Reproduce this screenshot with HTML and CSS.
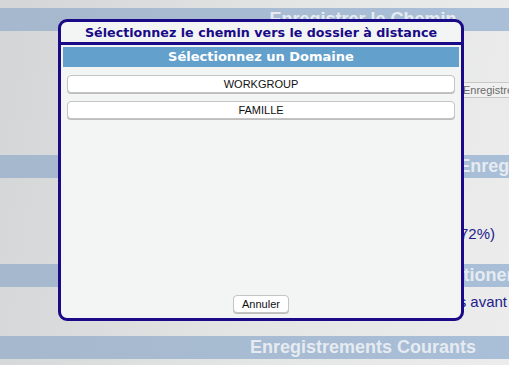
FILE: index.html
```html
<!DOCTYPE html>
<html lang="fr">
<head>
    <meta charset="UTF-8">
    <meta name="viewport" content="width=device-width, initial-scale=1.0">
    <title>Enregistrer le Chemin</title>
    <link rel="stylesheet" href="styles.css">
</head>
<body>
    <div class="page">
        <div class="section">
            <h2 class="band">Enregistrer le Chemin</h2>
            <div class="content content-path">
                <button class="save-btn">Enregistrer</button>
            </div>
        </div>
        <div class="section">
            <h2 class="band">Configuration de tous les Réglages d'Enregistrement</h2>
            <div class="content content-space">
                <p class="info">Espace utilisé : 2,9 To sur 4 To (72%)</p>
            </div>
        </div>
        <div class="section">
            <h2 class="band">Options de Sauvegarde et Repositionement</h2>
            <div class="content content-options">
                <p class="info">Supprimer les anciens enregistrements avant</p>
            </div>
        </div>
        <div class="section">
            <h2 class="band">Enregistrements Courants</h2>
        </div>
    </div>

    <div class="dialog">
        <h1 class="dialog-title">Sélectionnez le chemin vers le dossier à distance</h1>
        <h3 class="dialog-sub">Sélectionnez un Domaine</h3>
        <div class="domains">
            <button class="domain">WORKGROUP</button>
            <button class="domain">FAMILLE</button>
        </div>
        <div class="dialog-foot">
            <button class="cancel">Annuler</button>
        </div>
    </div>
</body>
</html>
```

FILE: styles.css
```css
html, body {
    margin: 0;
    height: 100%;
    overflow: hidden;
}
body {
    font-family: "Liberation Sans", Arial, sans-serif;
    background: linear-gradient(100deg, #d3d5d6 0%, #e4e5e5 55%, #ececec 100%);
    position: relative;
}
.page {
    width: 726px;
    padding-top: 8px;
}
.band {
    margin: 0;
    height: 23px;
    line-height: 23px;
    text-align: center;
    font-size: 18px;
    font-weight: bold;
    white-space: nowrap;
    color: #e6ebf1;
    background: linear-gradient(to right, #a6b8cd, #aac2dc);
}
.content {
    position: relative;
}
.content-path {
    height: 124px;
}
.content-space {
    height: 86px;
}
.content-options {
    height: 49px;
}
.save-btn {
    position: absolute;
    left: 456px;
    top: 51px;
    height: 16px;
    padding: 0 6px;
    font-family: "Liberation Sans", Arial, sans-serif;
    font-size: 11px;
    color: #6a6a6a;
    background: #f0f0f0;
    border: 1px solid #c8c8c8;
    border-radius: 3px;
}
.info {
    margin: 0;
    text-align: right;
    font-size: 15px;
    color: #251c88;
    white-space: nowrap;
}
.content-space .info {
    padding-top: 47px;
    margin-right: 231px;
}
.content-options .info {
    padding-top: 6px;
    margin-right: 219px;
}

.dialog {
    position: absolute;
    left: 58px;
    top: 19px;
    width: 400px;
    height: 296px;
    border: 3px solid #1a0a88;
    border-radius: 9px;
    background: #f3f5f5;
    display: flex;
    flex-direction: column;
    font-family: "DejaVu Sans", Verdana, sans-serif;
}
.dialog-title {
    margin: 0;
    padding: 3px 2px 2px;
    text-align: center;
    font-size: 12.7px;
    font-weight: bold;
    color: #1a0a88;
    border-bottom: 3px solid #1a0a88;
}
.dialog-sub {
    margin: 2px 2px 0;
    height: 20px;
    line-height: 20px;
    text-align: center;
    font-size: 13px;
    font-weight: bold;
    color: #ffffff;
    background: #64a0cc;
}
.domains {
    display: flex;
    flex-direction: column;
    gap: 8px;
    padding: 8px 6px 0;
    flex: 1;
}
.domain {
    height: 18px;
    padding: 0;
    font-family: "Liberation Sans", Arial, sans-serif;
    font-size: 11px;
    color: #111;
    background: #ffffff;
    border: 1px solid #c4c4c4;
    border-radius: 4px;
    box-shadow: 0 1px 0 #bdbdbd;
}
.dialog-foot {
    text-align: center;
    padding-bottom: 5px;
}
.cancel {
    height: 18px;
    padding: 0 8px;
    font-family: "Liberation Sans", Arial, sans-serif;
    font-size: 11px;
    color: #111;
    background: #ffffff;
    border: 1px solid #c4c4c4;
    border-radius: 4px;
    box-shadow: 0 1px 0 #bdbdbd;
}
```
